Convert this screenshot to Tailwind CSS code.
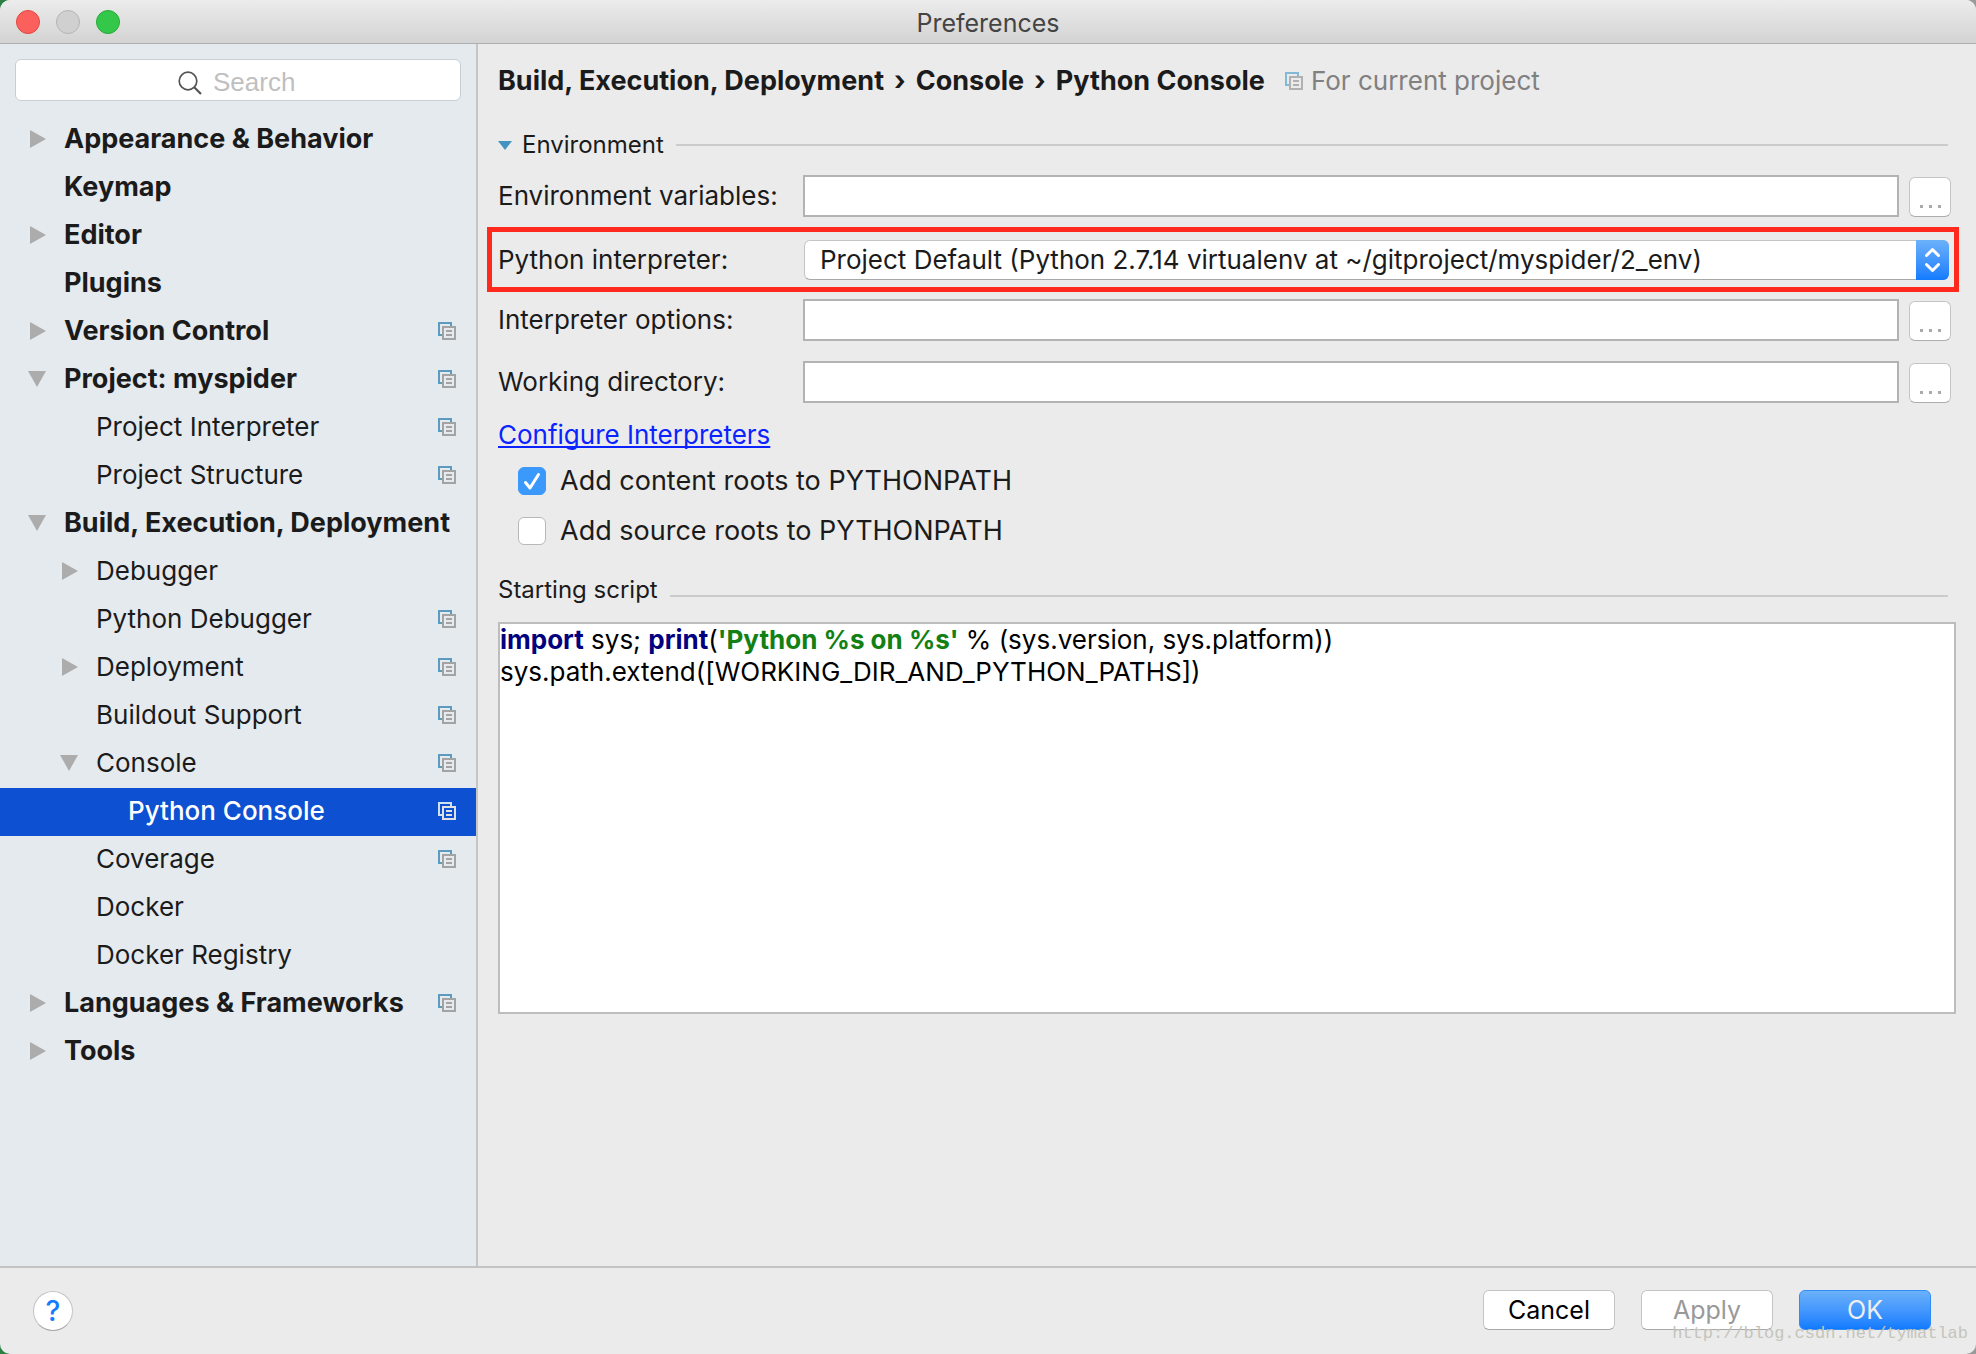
<!DOCTYPE html>
<html lang="en">
<head>
<meta charset="utf-8">
<title>Preferences</title>
<script src="https://cdn.jsdelivr.net/npm/@tailwindcss/browser@4"></script>
</head>
<body class="bg-linear-to-r from-[#2a7f41] to-[#9a9a9a] font-[Inter,sans-serif] text-[26px] leading-8 text-[#1b1b1b]">
<svg class="hidden" aria-hidden="true">
  <symbol id="right" viewBox="0 0 18 18"><path d="M2 0 18 9 2 18z" fill="#acacac"/></symbol>
  <symbol id="down" viewBox="0 0 18 18"><path d="M0 1H18L9 17z" fill="#acacac"/></symbol>
  <symbol id="copy" viewBox="0 0 18 18"><path d="M4 13H1V1H13V4" fill="none" stroke="var(--back,#5b9cc0)" stroke-width="2"/><path d="M5 5H17V17H5zM8 9H14M8 13H14" fill="none" stroke="var(--front,#a3a3a3)" stroke-width="2"/></symbol>
</svg>
<div class="flex min-h-screen flex-col overflow-hidden rounded-[10px] bg-[#ebebeb]">
  <header class="relative flex h-11 shrink-0 items-center border-b border-[#b0b0b0] bg-linear-to-b from-[#ececec] to-[#d3d3d3] px-4">
    <div class="flex gap-4">
      <button aria-label="Close" class="size-6 rounded-full border border-[#e2463f] bg-[#fc605c]"></button>
      <button aria-label="Minimize" class="size-6 rounded-full border border-[#b4b4b4] bg-[#d0d0d0]"></button>
      <button aria-label="Zoom" class="size-6 rounded-full border border-[#27a938] bg-[#34c84a]"></button>
    </div>
    <h1 class="flex-1 pt-0.5 pr-[104px] text-center text-[25px] text-[#444]">Preferences</h1>
  </header>

  <div class="flex flex-1">
    <nav class="w-[478px] shrink-0 border-r-2 border-[#c3c5c7] bg-[#e5eaee]">
      <div class="relative mx-[15px] mt-[15px] mb-[15px] h-[42px]">
        <input type="search" aria-label="Search" placeholder="Search" class="h-full w-full rounded-md border border-[#c9ced3] bg-white pt-1 pl-[197px] font-['Liberation_Sans',sans-serif] text-[26px] placeholder:text-[#bfbfbf]">
        <svg class="pointer-events-none absolute top-3 left-[163px] size-6" viewBox="0 0 24 24" fill="none" stroke="#555" stroke-width="1.700"><circle cx="10" cy="10" r="8.800"/><path d="M16 16 23 23" stroke-width="2.200"/></svg>
      </div>
      <ul>
        <li class="flex h-12 items-center pr-5 pb-0.5 pl-7 text-[27px] font-bold"><svg class="mr-[18px] size-[18px]"><use href="#right"/></svg>Appearance &amp; Behavior</li>
        <li class="flex h-12 items-center pr-5 pb-0.5 pl-16 text-[27px] font-bold">Keymap</li>
        <li class="flex h-12 items-center pr-5 pb-0.5 pl-7 text-[27px] font-bold"><svg class="mr-[18px] size-[18px]"><use href="#right"/></svg>Editor</li>
        <li class="flex h-12 items-center pr-5 pb-0.5 pl-16 text-[27px] font-bold">Plugins</li>
        <li class="flex h-12 items-center pr-5 pb-0.5 pl-7 text-[27px] font-bold"><svg class="mr-[18px] size-[18px]"><use href="#right"/></svg>Version Control<svg class="ml-auto size-[18px]"><use href="#copy"/></svg></li>
        <li class="flex h-12 items-center pr-5 pb-0.5 pl-7 text-[27px] font-bold"><svg class="mr-[18px] size-[18px]"><use href="#down"/></svg>Project: myspider<svg class="ml-auto size-[18px]"><use href="#copy"/></svg></li>
        <li class="flex h-12 items-center pr-5 pb-0.5 pl-24">Project Interpreter<svg class="ml-auto size-[18px]"><use href="#copy"/></svg></li>
        <li class="flex h-12 items-center pr-5 pb-0.5 pl-24">Project Structure<svg class="ml-auto size-[18px]"><use href="#copy"/></svg></li>
        <li class="flex h-12 items-center pb-0.5 pl-7 text-[27px] font-bold whitespace-nowrap"><svg class="mr-[18px] size-[18px] shrink-0"><use href="#down"/></svg>Build, Execution, Deployment</li>
        <li class="flex h-12 items-center pr-5 pb-0.5 pl-[60px]"><svg class="mr-[18px] size-[18px]"><use href="#right"/></svg>Debugger</li>
        <li class="flex h-12 items-center pr-5 pb-0.5 pl-24">Python Debugger<svg class="ml-auto size-[18px]"><use href="#copy"/></svg></li>
        <li class="flex h-12 items-center pr-5 pb-0.5 pl-[60px]"><svg class="mr-[18px] size-[18px]"><use href="#right"/></svg>Deployment<svg class="ml-auto size-[18px]"><use href="#copy"/></svg></li>
        <li class="flex h-12 items-center pr-5 pb-0.5 pl-24">Buildout Support<svg class="ml-auto size-[18px]"><use href="#copy"/></svg></li>
        <li class="flex h-12 items-center pr-5 pb-0.5 pl-[60px]"><svg class="mr-[18px] size-[18px]"><use href="#down"/></svg>Console<svg class="ml-auto size-[18px]"><use href="#copy"/></svg></li>
        <li aria-current="page" class="flex h-12 items-center bg-[#0d50d1] pr-5 pb-0.5 pl-32 font-medium text-white">Python Console<svg class="ml-auto size-[18px] [--back:#cfe0f2] [--front:#e0e0e0]"><use href="#copy"/></svg></li>
        <li class="flex h-12 items-center pr-5 pb-0.5 pl-24">Coverage<svg class="ml-auto size-[18px]"><use href="#copy"/></svg></li>
        <li class="flex h-12 items-center pr-5 pb-0.5 pl-24">Docker</li>
        <li class="flex h-12 items-center pr-5 pb-0.5 pl-24">Docker Registry</li>
        <li class="flex h-12 items-center pr-5 pb-0.5 pl-7 text-[27px] font-bold"><svg class="mr-[18px] size-[18px]"><use href="#right"/></svg>Languages &amp; Frameworks<svg class="ml-auto size-[18px]"><use href="#copy"/></svg></li>
        <li class="flex h-12 items-center pr-5 pb-0.5 pl-7 text-[27px] font-bold"><svg class="mr-[18px] size-[18px]"><use href="#right"/></svg>Tools</li>
      </ul>
    </nav>

    <main class="min-w-0 flex-1 pt-[21px] pr-5 pb-8 pl-5">
      <div class="flex h-8 items-center text-[27px] font-bold whitespace-nowrap">
        <span>Build, Execution, Deployment</span><span class="mx-2.5">›</span><span>Console</span><span class="mx-2.5">›</span><span>Python Console</span>
        <svg class="ml-5 size-[18px] [--back:#82b8d8] [--front:#b0b0b0]"><use href="#copy"/></svg>
        <span class="ml-2 text-[26px] font-normal text-[#808080]">For current project</span>
      </div>

      <h2 class="mt-8 mr-2 flex h-8 items-center text-[24px]">
        <svg class="mr-2.5 h-[9px] w-3.5" viewBox="0 0 14 9"><path d="M0 0H14L7 9z" fill="#4393c0"/></svg>Environment<span class="ml-3 h-0.5 flex-1 bg-[#cbcbcb]"></span>
      </h2>

      <div class="mt-3.5 grid grid-cols-[305px_1fr] gap-y-5">
        <label for="env" class="self-center">Environment variables:</label>
        <div class="flex gap-2.5 pr-[5px]"><input id="env" class="h-[42px] min-w-0 flex-1 border-2 border-[#b3b3b3] bg-white px-2"><button aria-label="Edit environment variables" class="mt-0.5 flex h-10 w-[42px] items-end justify-center gap-1.5 rounded-md border border-[#c4c4c4] border-b-[#adadad] bg-white pb-2"><i class="size-[3px] bg-[#aaa]"></i><i class="size-[3px] bg-[#aaa]"></i><i class="size-[3px] bg-[#aaa]"></i></button></div>

        <div class="col-span-2 -mt-2.5 -mr-[3px] -mb-[13px] -ml-[11px] grid h-[65px] grid-cols-[306px_1fr] items-center border-[5px] border-[#ff2a1d] pl-1.5">
          <label for="interp">Python interpreter:</label>
          <div class="relative mr-[5px]">
            <select id="interp" class="block h-10 w-full appearance-none rounded-md border border-[#c4c4c4] border-b-[#a8a8a8] bg-white pl-[15px]"><option>Project Default (Python 2.7.14 virtualenv at ~/gitproject/myspider/2_env)</option></select>
            <svg class="pointer-events-none absolute top-0 right-0 h-10 w-[33px] rounded-r-md bg-linear-to-b from-[#6bb1fa] to-[#0f7bff]" viewBox="0 0 33 40" fill="none" stroke="#fff" stroke-width="3" stroke-linecap="round" stroke-linejoin="round"><path d="M10.500 15.500 16.500 9.500 22.500 15.500M10.500 24.500 16.500 30.500 22.500 24.500"/></svg>
          </div>
        </div>

        <label for="opts" class="self-center">Interpreter options:</label>
        <div class="flex gap-2.5 pr-[5px]"><input id="opts" class="h-[42px] min-w-0 flex-1 border-2 border-[#b3b3b3] bg-white px-2"><button aria-label="Edit interpreter options" class="mt-0.5 flex h-10 w-[42px] items-end justify-center gap-1.5 rounded-md border border-[#c4c4c4] border-b-[#adadad] bg-white pb-2"><i class="size-[3px] bg-[#aaa]"></i><i class="size-[3px] bg-[#aaa]"></i><i class="size-[3px] bg-[#aaa]"></i></button></div>

        <label for="cwd" class="self-center">Working directory:</label>
        <div class="flex gap-2.5 pr-[5px]"><input id="cwd" class="h-[42px] min-w-0 flex-1 border-2 border-[#b3b3b3] bg-white px-2"><button aria-label="Choose working directory" class="mt-0.5 flex h-10 w-[42px] items-end justify-center gap-1.5 rounded-md border border-[#c4c4c4] border-b-[#adadad] bg-white pb-2"><i class="size-[3px] bg-[#aaa]"></i><i class="size-[3px] bg-[#aaa]"></i><i class="size-[3px] bg-[#aaa]"></i></button></div>
      </div>

      <a href="#" class="mt-4 block w-fit text-[#0a23ff] underline decoration-2 underline-offset-2 [text-decoration-skip-ink:none]">Configure Interpreters</a>

      <div class="mt-[14px] flex flex-col gap-[18px] pl-5">
        <label class="flex items-center gap-3.5 text-[27px] leading-8"><span class="relative size-7"><input type="checkbox" checked class="block size-7 appearance-none rounded-md border border-[#b8b8b8] bg-white checked:border-[#3b99fc] checked:bg-[#3b99fc]"><svg class="pointer-events-none absolute inset-0 size-7" viewBox="0 0 28 28" fill="none" stroke="#fff" stroke-width="3" stroke-linecap="round" stroke-linejoin="round"><path d="M7.500 15.500 12 21 20.500 7.500"/></svg></span>Add content roots to PYTHONPATH</label>
        <label class="flex items-center gap-3.5 text-[27px] leading-8"><input type="checkbox" class="block size-7 appearance-none rounded-md border border-[#b8b8b8] bg-white">Add source roots to PYTHONPATH</label>
      </div>

      <h2 id="script-label" class="mt-[27px] mr-2 flex h-8 items-center text-[24px]">Starting script<span class="mt-3 ml-3 h-0.5 flex-1 bg-[#cbcbcb]"></span></h2>
      <div role="textbox" aria-multiline="true" aria-labelledby="script-label" contenteditable="true" spellcheck="false" class="mt-4 h-[392px] border-2 border-[#bdbdbd] bg-white text-black outline-none"><div><b class="text-[#000080]">import</b> sys; <b class="text-[#000080]">print</b>(<b class="text-[#128012]">'Python %s on %s'</b> % (sys.version, sys.platform))</div><div>sys.path.extend([WORKING_DIR_AND_PYTHON_PATHS])</div></div>
    </main>
  </div>

  <footer class="relative flex h-22 shrink-0 items-center border-t-2 border-[#c3c3c3] pr-[45px] pl-[33px]">
    <button aria-label="Help" class="flex size-10 items-center justify-center rounded-full border border-[#c4c4c4] border-b-[#a8a8a8] bg-white text-[28px] font-medium text-[#147aff]">?</button>
    <div class="ml-auto flex gap-[26px] pb-0.5 text-[25px]">
      <button class="h-10 w-[132px] rounded-md border border-[#c4c4c4] border-b-[#a8a8a8] bg-white text-black">Cancel</button>
      <button disabled class="h-10 w-[132px] rounded-md border border-[#c4c4c4] border-b-[#a8a8a8] bg-white text-[#999]">Apply</button>
      <button class="h-10 w-[132px] rounded-md border border-[#2f8cf7] bg-linear-to-b from-[#6bb1fa] to-[#0f7bff] text-[#eee]">OK</button>
    </div>
    <span class="pointer-events-none absolute right-2 bottom-2 font-['Liberation_Mono',monospace] text-[17px] leading-6 text-[#c4c4bc]">http://blog.csdn.net/tymatlab</span>
  </footer>
</div>
</body>
</html>
